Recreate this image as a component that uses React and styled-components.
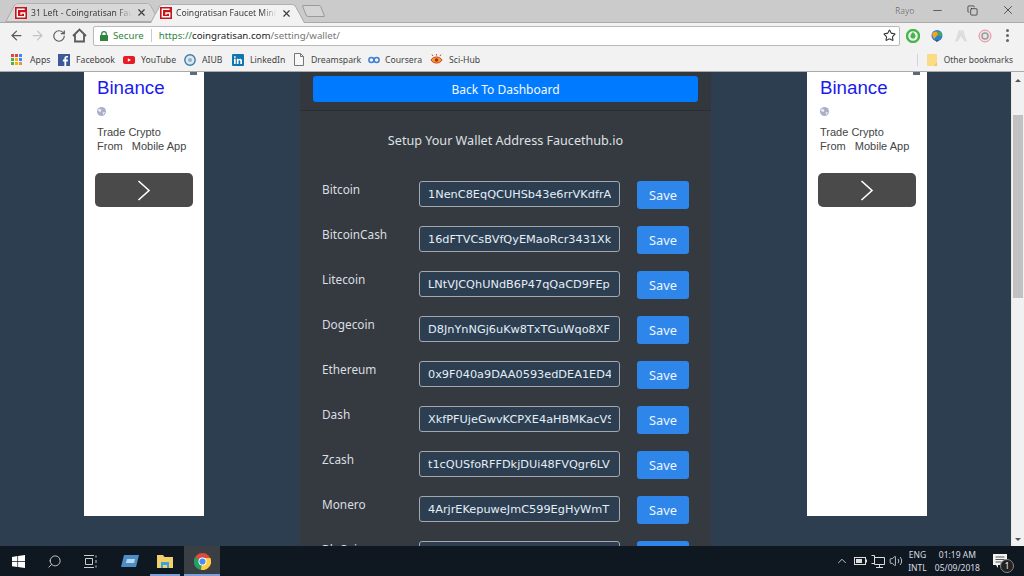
import React from "react"
import styled, { createGlobalStyle } from "styled-components"
import { ArrowLeft, ArrowRight, RotateCw, Star, X, Minus, Copy, ChevronUp, Volume2, Search } from "lucide-react"

const GlobalStyle = createGlobalStyle`
    html, body {
        margin: 0;
        padding: 0;
        width: 1024px;
        height: 576px;
        overflow: hidden;
        background: #2c3e50;
    }
    * {
        box-sizing: border-box;
    }
`

const Screen = styled.div`
    width: 1024px;
    height: 576px;
    display: flex;
    flex-direction: column;
    overflow: hidden;
    font-family: "Open Sans", "Noto Sans", sans-serif;
`

/* browser chrome */
const TabStrip = styled.div`
    position: relative;
    z-index: 1;
    height: 22px;
    flex: none;
    display: flex;
    align-items: flex-end;
    padding-left: 5px;
    background: #cbcbcb;
`

const Tab = styled.div`
    position: relative;
    width: 155px;
    height: 19px;
    flex: none;
    margin-right: -10px;
    margin-bottom: ${p => (p.$active ? "-1px" : "0")};
    display: flex;
    align-items: center;
    padding: ${p => (p.$active ? "0 13px 1px 10px" : "0 13px 0 10px")};
    color: #3c3c3c;
    font-family: "Noto Sans", sans-serif;
    font-size: 8.6px;
    white-space: nowrap;
    z-index: ${p => (p.$active ? 2 : 1)};

    &::before {
        content: "";
        position: absolute;
        inset: -3px 0 0;
        z-index: -1;
        background: ${p => (p.$active ? "#f2f2f2" : "#d8d8d8")};
        border: 1px solid #a8a8a8;
        border-bottom: ${p => (p.$active ? "none" : "1px solid #a8a8a8")};
        border-radius: 3px 3px 0 0;
        transform: perspective(30px) rotateX(12deg);
        transform-origin: bottom;
    }
`

const TabTitle = styled.span`
    flex: 1;
    min-width: 0;
    margin: 0 4px;
    overflow: hidden;
    -webkit-mask-image: linear-gradient(to right, #000 85%, transparent);
    mask-image: linear-gradient(to right, #000 85%, transparent);
`

const NewTab = styled.div`
    width: 19px;
    height: 12px;
    flex: none;
    margin: 0 0 5px 9px;
    background: #d4d4d4;
    border: 1px solid #9a9a9a;
    border-radius: 2px;
    transform: skewX(22deg);
`

const WindowControls = styled.div`
    margin-left: auto;
    margin-right: -1px;
    align-self: flex-start;
    height: 20px;
    display: flex;
    align-items: center;
    color: #222;
`

const ProfileName = styled.span`
    width: 17px;
    margin-right: 8px;
    font-size: 8.5px;
    color: #6a6a6a;
    text-shadow: 0 0 1px #fff;
`

const WindowButton = styled.span`
    width: 35px;
    display: flex;
    justify-content: center;
`

const Toolbar = styled.div`
    height: 26px;
    flex: none;
    display: flex;
    align-items: center;
    padding-left: 6px;
    background: #f2f2f2;
    border-top: 1px solid #a9a9a9;
`

const NavButton = styled.span`
    width: 21px;
    display: flex;
    justify-content: center;
    color: ${p => (p.$off ? "#c4c4c4" : "#5a5a5a")};
`

const AddressBar = styled.div`
    width: 807px;
    height: 20px;
    margin-left: 3px;
    display: flex;
    align-items: center;
    padding: 0 3px 0 6px;
    background: #fff;
    border: 1px solid #b9b9b9;
    border-radius: 2px;
    font-family: "Noto Sans", sans-serif;
    font-size: 9.7px;
    white-space: nowrap;
`

const Secure = styled.span`
    display: flex;
    align-items: center;
    gap: 5px;
    padding-right: 7px;
    margin-right: 7px;
    color: #2e8540;
    border-right: 1px solid #ccc;
`

const UrlPart = styled.span`
    color: ${p => p.$color};
`

const StarWrap = styled.span`
    margin-left: auto;
    display: flex;
    color: #333;
`

const Extensions = styled.div`
    flex: 1;
    display: flex;
    align-items: center;
    padding-left: 1px;
`

const ExtensionSlot = styled.span`
    width: 24px;
    display: flex;
    justify-content: center;
`

const MenuDots = styled.span`
    display: flex;
    flex-direction: column;
    gap: 2px;
    margin-left: 9px;

    i {
        width: 3px;
        height: 3px;
        border-radius: 50%;
        background: #666;
    }
`

const Bookmarks = styled.div`
    height: 24px;
    flex: none;
    display: flex;
    align-items: center;
    padding-left: 11px;
    background: #f2f2f2;
    border-bottom: 1px solid #a9a9a9;
    color: #444;
    font-family: "Noto Sans", sans-serif;
    font-size: 8.7px;
`

const Bookmark = styled.span`
    width: ${p => p.$width}px;
    flex: none;
    display: flex;
    align-items: center;
    gap: ${p => p.$gap || 6}px;
    white-space: nowrap;
`

const OtherBookmarks = styled.span`
    margin-left: auto;
    margin-right: 11px;
    padding-left: 9px;
    display: flex;
    align-items: center;
    gap: 7px;
    border-left: 1px solid #d4d4d4;
    font-size: 8.4px;
`

/* page */
const Viewport = styled.div`
    flex: 1;
    min-height: 0;
    display: flex;
    overflow: hidden;
`

const Page = styled.main`
    flex: 1;
    display: flex;
    align-items: flex-start;
    justify-content: space-between;
    padding: 0 84px;
    background: #2c3e50;
    overflow: hidden;
`

const Ad = styled.aside`
    position: relative;
    width: 120px;
    height: 444px;
    padding: 4px 12px 0 13px;
    background: #fff;
    font-family: "Liberation Sans", Arial, sans-serif;
`

const AdBadge = styled.span`
    position: absolute;
    top: 0;
    right: 7px;
    width: 7px;
    height: 3px;
    background: #5b6a80;
`

const AdTitle = styled.div`
    color: #1a1aee;
    font-size: 18.7px;
    line-height: 24px;
`

const AdGlobeWrap = styled.div`
    display: flex;
    margin-top: 7px;
`

const AdText = styled.div`
    margin-top: 9px;
    color: #444;
    font-size: 11px;
    line-height: 14px;
    white-space: pre;
`

const AdButton = styled.div`
    width: 98px;
    height: 34px;
    margin: 20px 0 0 -2px;
    display: flex;
    align-items: center;
    justify-content: center;
    border-radius: 5px;
    background: #4a4a4a;
`

const Panel = styled.section`
    width: 411px;
    height: 474px;
    flex: none;
    overflow: hidden;
    background: #343a40;
`

const PanelHeader = styled.div`
    height: 39px;
    padding: 4px 13px 0;
    background: rgba(0, 0, 0, 0.03);
    border-bottom: 1px solid rgba(0, 0, 0, 0.15);
`

const BackButton = styled.a`
    height: 26px;
    display: flex;
    align-items: center;
    justify-content: center;
    border-radius: 3px;
    background: #007bff;
    color: #f4f8ff;
    font-family: "Noto Sans", sans-serif;
    font-size: 12px;
`

const Title = styled.h2`
    margin: 20px 0 30px;
    color: #dfe1e3;
    font-family: "Noto Sans", sans-serif;
    font-size: 12.6px;
    font-weight: 400;
    line-height: 20px;
    text-align: center;
`

const WalletList = styled.div`
    display: flex;
    flex-direction: column;
    gap: 17px;
    padding: 0 22px;
`

const WalletRow = styled.div`
    display: flex;
    align-items: flex-start;
`

const WalletLabel = styled.label`
    width: 97px;
    color: #dcdee0;
    font-family: "Noto Sans", sans-serif;
    font-size: 11.8px;
    line-height: 16px;
`

const WalletInput = styled.input`
    width: 201px;
    height: 26px;
    padding: 0 8px;
    background: #2c3e50;
    border: 1px solid #a2a8ae;
    border-radius: 3px;
    color: #e4eef8;
    font-family: "DejaVu Sans", Verdana, sans-serif;
    font-size: 11.3px;
    outline: none;
`

const SaveButton = styled.button`
    width: 52px;
    height: 28px;
    margin-left: 17px;
    padding: 0;
    border: none;
    border-radius: 3px;
    background: #2e86ea;
    color: #eef5ff;
    font-family: "Noto Sans", sans-serif;
    font-size: 12.8px;
`

const Scrollbar = styled.div`
    width: 13px;
    flex: none;
    display: flex;
    flex-direction: column;
    align-items: center;
    background: #f1f1f1;
    border-left: 1px solid #e8e8e8;
`

const ScrollArrow = styled.span`
    width: 0;
    height: 0;
    border-left: 3px solid transparent;
    border-right: 3px solid transparent;
    ${p => (p.$down ? "border-top: 3px solid #555;" : "border-bottom: 3px solid #555;")}
    margin: ${p => (p.$down ? "auto 0 5px" : "7px 0 33px")};
`

const ScrollThumb = styled.div`
    width: 10px;
    height: 183px;
    background: #c1c1c1;
`

/* taskbar */
const Taskbar = styled.footer`
    height: 30px;
    flex: none;
    display: flex;
    align-items: center;
    background: #0f1720;
    color: #d8dde2;
    font-family: "Noto Sans", sans-serif;
    font-size: 8.5px;
`

const TaskIcon = styled.span`
    position: relative;
    width: ${p => p.$width}px;
    height: 30px;
    margin-right: ${p => p.$after || 0}px;
    display: flex;
    align-items: center;
    justify-content: center;
    background: ${p => (p.$active ? "#3a3f44" : "transparent")};

    ${p => p.$running && `
        &::after {
            content: "";
            position: absolute;
            left: 0;
            right: 0;
            bottom: 0;
            height: 2px;
            background: #7f9fd8;
        }
    `}
`

const Tray = styled.div`
    margin-left: auto;
    display: flex;
    align-items: center;
    height: 30px;
`

const TrayIcon = styled.span`
    width: 18px;
    display: flex;
    justify-content: center;
    color: #d5d9dd;
`

const TrayText = styled.div`
    text-align: center;
    line-height: 13px;
    margin-left: ${p => p.$gap}px;
    white-space: nowrap;
`

const Notifications = styled.span`
    position: relative;
    width: 28px;
    height: 30px;
    margin: 0 8px;
    padding: 8px 0 0 5px;
`

const NotifyCount = styled.span`
    position: absolute;
    left: 12px;
    top: 13px;
    width: 14px;
    height: 14px;
    border-radius: 50%;
    background: #222;
    border: 1px solid #888;
    color: #fff;
    font-size: 8px;
    line-height: 12px;
    text-align: center;
`

const Favicon = () => (
    <svg width="12" height="12" viewBox="0 0 13 13" style={{ flex: "none" }}>
        <rect width="13" height="13" fill="#c8141b" />
        <path d="M10.5 2.5H2.5v8h8V6.5H6.5v2" fill="none" stroke="#fff" strokeWidth="1.5" />
    </svg>
)

const HomeIcon = () => (
    <svg width="15" height="15" viewBox="0 0 15 15" fill="none" stroke="#5a5a5a" strokeWidth="1.8">
        <path d="M1 8 7.500 1.500 14 8M3 6.500V13.500H12V6.500" />
    </svg>
)

const LockIcon = () => (
    <svg width="8" height="10" viewBox="0 0 8 10">
        <rect y="4" width="8" height="6" rx=".5" fill="#2e8540" />
        <path d="M1.700 4.500V3a2.300 2.300 0 0 1 4.600 0v1.500" fill="none" stroke="#2e8540" strokeWidth="1.200" />
    </svg>
)

const AppsIcon = () => (
    <svg width="11" height="11" viewBox="0 0 11 11">
        {[0, 4, 8].flatMap(y =>
            [0, 4, 8].map(x => {
                const fill = y === 0 ? ["#e0463a", "#e0463a", "#4285f4"][x / 4] : y === 4 ? ["#4caf50", "#f4b400", "#4285f4"][x / 4] : ["#4caf50", "#f4b400", "#e0963a"][x / 4]
                return <rect key={`${x}-${y}`} x={x} y={y} width="3" height="3" fill={fill} />
            })
        )}
    </svg>
)

const FacebookIcon = () => (
    <svg width="12" height="12" viewBox="0 0 12 12">
        <rect width="12" height="12" fill="#3b5998" />
        <path d="M8.2 12V7.4h1.5l.3-1.8H8.2V4.5c0-.5.2-.9.9-.9h.9V2c-.3 0-.8-.1-1.3-.1-1.4 0-2.3.8-2.3 2.4v1.3H4.9v1.8h1.5V12z" fill="#fff" />
    </svg>
)

const YoutubeIcon = () => (
    <svg width="12" height="12" viewBox="0 0 12 12">
        <rect y="2" width="12" height="8" rx="2" fill="#e61b23" />
        <path d="M4.8 4.2v3.6L8 6z" fill="#fff" />
    </svg>
)

const AiubIcon = () => (
    <svg width="12" height="12" viewBox="0 0 12 12">
        <circle cx="6" cy="6" r="5.2" fill="#dce8f2" stroke="#3d7ca8" strokeWidth="1.4" />
        <circle cx="6" cy="6" r="2" fill="#8fb2cc" />
    </svg>
)

const LinkedinIcon = () => (
    <svg width="12" height="12" viewBox="0 0 12 12">
        <rect width="12" height="12" rx="1" fill="#0f76b0" />
        <path d="M2 4.8h1.7V10H2zM2 2.2h1.7v1.6H2zM4.8 4.8h1.6v.8c.3-.5.9-.9 1.7-.9 1.5 0 1.9 1 1.9 2.3v3H8.300V7.400c0-.7-.2-1.200-.8-1.200-.7 0-1 .5-1 1.200V10H4.800z" fill="#fff" />
    </svg>
)

const DocIcon = () => (
    <svg width="10" height="13" viewBox="0 0 10 13">
        <path d="M.5.5h6l3 3v9H.5zM6.500.5v3h3" fill="#f8f8f8" stroke="#777" />
    </svg>
)

const CourseraIcon = () => (
    <svg width="12" height="8" viewBox="0 0 12 8">
        <circle cx="3.400" cy="4" r="2.500" fill="none" stroke="#3f7fcf" strokeWidth="1.500" />
        <circle cx="8.600" cy="4" r="2.500" fill="none" stroke="#3f7fcf" strokeWidth="1.500" />
    </svg>
)

const SciHubIcon = () => (
    <svg width="13" height="11" viewBox="0 0 13 11">
        <path d="M1 6c2-4 9-4 11 0-2 4-9 4-11 0z" fill="#f0a030" stroke="#d2401f" />
        <circle cx="6.500" cy="6" r="1.800" fill="#b02a10" />
        <path d="M3 2 2 .5M6.500 1.500V0M10 2l1-1.500" stroke="#d2401f" />
    </svg>
)

const FolderIcon = () => (
    <svg width="10" height="12" viewBox="0 0 10 12">
        <rect width="10" height="12" rx="1" fill="#fbdc84" />
        <path d="M7 12h3V8z" fill="#efc65f" />
    </svg>
)

const DropExtension = () => (
    <svg width="14" height="14" viewBox="0 0 14 14">
        <circle cx="7" cy="7" r="6" fill="none" stroke="#45b649" strokeWidth="2.400" />
        <path d="M7 3c2 2 2.500 3 2.500 4.200A2.500 2.500 0 0 1 4.500 7.200C4.500 6 5 5 7 3z" fill="#45b649" />
    </svg>
)

const GlobeExtension = () => (
    <svg width="14" height="14" viewBox="0 0 14 14">
        <circle cx="7" cy="6.500" r="5.500" fill="#2f7fd0" />
        <path d="M2 5c2-3 5-3 6-1s-2 3-3 5-2-1-3-4z" fill="#f2a51f" />
        <path d="M7 3c3-1 5 1 5 3s-3 1-4 0z" fill="#4aa84a" />
        <path d="M3 10c2 2 5 2 7 0l-3 3z" fill="#2c2c2c" />
    </svg>
)

const GreyExtension = () => (
    <svg width="14" height="14" viewBox="0 0 14 14">
        <path d="M1 13 5 1h1.500L7 5l.5-4H9l4 12-3-1-3-5-3 5z" fill="#dcdcdc" />
    </svg>
)

const OperaExtension = () => (
    <svg width="14" height="14" viewBox="0 0 14 14">
        <circle cx="7" cy="7" r="6" fill="#e8e4e6" stroke="#ee8a98" />
        <circle cx="7" cy="7" r="3" fill="none" stroke="#9c9c9c" strokeWidth="1.500" />
    </svg>
)

const AdGlobe = () => (
    <svg width="9" height="9" viewBox="0 0 9 9">
        <circle cx="4.500" cy="4.500" r="4.500" fill="#aab0cc" />
        <path d="M2 1.500 4.500 3 3.500 5 1 4zM5.500 5.500 8 5 6.500 8z" fill="#eef0f6" />
    </svg>
)

const AdArrow = () => (
    <svg width="14" height="21" viewBox="0 0 14 21" fill="none" stroke="#fff" strokeWidth="1.600">
        <path d="M1.500 1 12 10.500 1.500 20" />
    </svg>
)

const WindowsLogo = () => (
    <svg width="13" height="13" viewBox="0 0 13 13">
        <path d="M0 1.900 5.400 1.100V6.200H0zM6.100 1 13 0V6.200H6.100zM0 6.900H5.400V12L0 11.200zM6.100 6.900H13V13L6.100 12z" fill="#fff" />
    </svg>
)

const TaskViewIcon = () => (
    <svg width="13" height="13" viewBox="0 0 13 13" fill="none" stroke="#ccc">
        <path d="M1.500 3.500h7v6h-7zM0 .5h10M0 12.500h10M12 .5v2M12 5v3M12 10.500v2" />
    </svg>
)

const ExplorerIcon = () => (
    <svg width="19" height="14" viewBox="0 0 19 14">
        <path d="M4 1h15l-3 12H1z" fill="#4d8fc4" />
        <path d="M7 5h8l-1 4H6z" fill="#b6d8f2" />
    </svg>
)

const FolderTaskIcon = () => (
    <svg width="16" height="14" viewBox="0 0 16 14">
        <path d="M0 1h6l1.500 2H16v11H0z" fill="#f2cf6b" />
        <path d="M4 8h8v6h-2v-3H6v3H4z" fill="#37a4dc" />
    </svg>
)

const ChromeIcon = () => (
    <svg width="17" height="17" viewBox="0 0 17 17">
        <circle cx="8.500" cy="8.500" r="8.500" fill="#dd4b3e" />
        <path d="M8.500 8.500 1.100 4.300A8.500 8.500 0 0 0 7 16.900z" fill="#1ea362" />
        <path d="M8.500 5H16.300A8.500 8.500 0 0 1 7 16.900z" fill="#ffcd40" />
        <circle cx="8.500" cy="8.500" r="4" fill="#fff" />
        <circle cx="8.500" cy="8.500" r="3.100" fill="#4a8bf5" />
    </svg>
)

const BatteryIcon = () => (
    <svg width="13" height="8" viewBox="0 0 13 8">
        <rect x=".5" y=".5" width="11" height="7" fill="none" stroke="#ddd" />
        <rect x="2" y="2" width="6" height="4" fill="#ddd" />
        <rect x="12" y="2.500" width="1" height="3" fill="#ddd" />
    </svg>
)

const NetworkIcon = () => (
    <svg width="14" height="13" viewBox="0 0 14 13" fill="none" stroke="#ddd">
        <path d="M3.500 2.500h10v7h-10zM8.500 9.500v3M5 12.500h7M.5.500h3v8h-3" />
    </svg>
)

const NotificationIcon = () => (
    <svg width="14" height="14" viewBox="0 0 14 14">
        <path d="M0 0h14v11H5v3l-2-3H0z" fill="#f2f2f2" />
        <path d="M2.500 3h9M2.500 5.500h9M2.500 8h6" stroke="#555" />
    </svg>
)

const wallets = [
    { name: "Bitcoin", address: "1NenC8EqQCUHSb43e6rrVKdfrA" },
    { name: "BitcoinCash", address: "16dFTVCsBVfQyEMaoRcr3431Xk" },
    { name: "Litecoin", address: "LNtVJCQhUNdB6P47qQaCD9FEp" },
    { name: "Dogecoin", address: "D8JnYnNGj6uKw8TxTGuWqo8XF" },
    { name: "Ethereum", address: "0x9F040a9DAA0593edDEA1ED4" },
    { name: "Dash", address: "XkfPFUjeGwvKCPXE4aHBMKacVS" },
    { name: "Zcash", address: "t1cQUSfoRFFDkjDUi48FVQgr6LV" },
    { name: "Monero", address: "4ArjrEKepuweJmC599EgHyWmT" },
    { name: "BlaCoin", address: "" },
]

const bookmarks = [
    { label: "Apps", icon: <AppsIcon />, width: 47, gap: 8 },
    { label: "Facebook", icon: <FacebookIcon />, width: 65 },
    { label: "YouTube", icon: <YoutubeIcon />, width: 61 },
    { label: "AIUB", icon: <AiubIcon />, width: 48 },
    { label: "LinkedIn", icon: <LinkedinIcon />, width: 62 },
    { label: "Dreamspark", icon: <DocIcon />, width: 74, gap: 7 },
    { label: "Coursera", icon: <CourseraIcon />, width: 62, gap: 5 },
    { label: "Sci-Hub", icon: <SciHubIcon />, width: 60 },
]

const BinanceAd = () => (
    <Ad>
        <AdBadge />
        <AdTitle>Binance</AdTitle>
        <AdGlobeWrap><AdGlobe /></AdGlobeWrap>
        <AdText>{"Trade Crypto\nFrom   Mobile App"}</AdText>
        <AdButton>
            <AdArrow />
        </AdButton>
    </Ad>
)

const App = () => {
    return (
        <Screen>
            <GlobalStyle />
            <TabStrip>
                <Tab>
                    <Favicon />
                    <TabTitle>31 Left - Coingratisan Faucet Mining</TabTitle>
                    <X size={11} strokeWidth={2.5} />
                </Tab>
                <Tab $active>
                    <Favicon />
                    <TabTitle>Coingratisan Faucet Mining Bot</TabTitle>
                    <X size={11} strokeWidth={2.5} />
                </Tab>
                <NewTab />
                <WindowControls>
                    <ProfileName>Rayo</ProfileName>
                    <WindowButton><Minus size={13} strokeWidth={1.2} /></WindowButton>
                    <WindowButton><Copy size={11} strokeWidth={1.5} /></WindowButton>
                    <WindowButton><X size={14} strokeWidth={1.2} /></WindowButton>
                </WindowControls>
            </TabStrip>
            <Toolbar>
                <NavButton><ArrowLeft size={15} strokeWidth={2} /></NavButton>
                <NavButton $off><ArrowRight size={15} strokeWidth={2} /></NavButton>
                <NavButton><RotateCw size={14} strokeWidth={2} /></NavButton>
                <NavButton><HomeIcon /></NavButton>
                <AddressBar>
                    <Secure><LockIcon />Secure</Secure>
                    <UrlPart $color="#2e8540">https://</UrlPart>
                    <UrlPart $color="#222">coingratisan.com</UrlPart>
                    <UrlPart $color="#777">/setting/wallet/</UrlPart>
                    <StarWrap><Star size={13} strokeWidth={2} /></StarWrap>
                </AddressBar>
                <Extensions>
                    <ExtensionSlot><DropExtension /></ExtensionSlot>
                    <ExtensionSlot><GlobeExtension /></ExtensionSlot>
                    <ExtensionSlot><GreyExtension /></ExtensionSlot>
                    <ExtensionSlot><OperaExtension /></ExtensionSlot>
                    <MenuDots><i /><i /><i /></MenuDots>
                </Extensions>
            </Toolbar>
            <Bookmarks>
                {bookmarks.map(b => (
                    <Bookmark key={b.label} $width={b.width} $gap={b.gap}>{b.icon}{b.label}</Bookmark>
                ))}
                <OtherBookmarks><FolderIcon />Other bookmarks</OtherBookmarks>
            </Bookmarks>
            <Viewport>
                <Page>
                    <BinanceAd />
                    <Panel>
                        <PanelHeader>
                            <BackButton>Back To Dashboard</BackButton>
                        </PanelHeader>
                        <Title>Setup Your Wallet Address Faucethub.io</Title>
                        <WalletList>
                            {wallets.map(w => (
                                <WalletRow key={w.name}>
                                    <WalletLabel>{w.name}</WalletLabel>
                                    <WalletInput readOnly value={w.address} />
                                    <SaveButton>Save</SaveButton>
                                </WalletRow>
                            ))}
                        </WalletList>
                    </Panel>
                    <BinanceAd />
                </Page>
                <Scrollbar>
                    <ScrollArrow />
                    <ScrollThumb />
                    <ScrollArrow $down />
                </Scrollbar>
            </Viewport>
            <Taskbar>
                <TaskIcon $width={37}><WindowsLogo /></TaskIcon>
                <TaskIcon $width={35}><Search size={15} strokeWidth={1.5} color="#ccc" style={{ transform: "scaleX(-1)" }} /></TaskIcon>
                <TaskIcon $width={37}><TaskViewIcon /></TaskIcon>
                <TaskIcon $width={41}><ExplorerIcon /></TaskIcon>
                <TaskIcon $width={30} $after={4} $running><FolderTaskIcon /></TaskIcon>
                <TaskIcon $width={36} $active $running><ChromeIcon /></TaskIcon>
                <Tray>
                    <TrayIcon><ChevronUp size={14} strokeWidth={1.5} /></TrayIcon>
                    <TrayIcon><BatteryIcon /></TrayIcon>
                    <TrayIcon><NetworkIcon /></TrayIcon>
                    <TrayIcon><Volume2 size={14} strokeWidth={1.5} /></TrayIcon>
                    <TrayText $gap={3}>ENG<br />INTL</TrayText>
                    <TrayText $gap={8}>01:19 AM<br />05/09/2018</TrayText>
                    <Notifications>
                        <NotificationIcon />
                        <NotifyCount>1</NotifyCount>
                    </Notifications>
                </Tray>
            </Taskbar>
        </Screen>
    )
}

export default App
